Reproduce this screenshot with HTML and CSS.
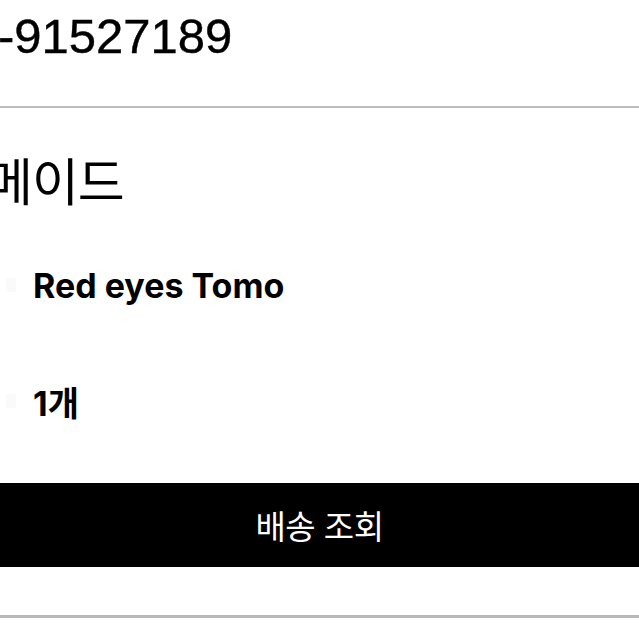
FILE: index.html
```html
<!DOCTYPE html>
<html lang="ko">
  <head>
    <meta charset="UTF-8" />
    <meta name="viewport" content="width=device-width, initial-scale=1.0" />
    <title>주문 상세</title>
    <link rel="stylesheet" href="styles.css">
  </head>
  <body>
    <main>
      <header class="order-no">-91527189</header>

      <section class="order">
        <h1 class="shop">메이드</h1>

        <div class="field">
          <span class="label"></span>
          <span class="value">Red eyes Tomo</span>
        </div>
        <div class="field">
          <span class="label"></span>
          <span class="value">1개</span>
        </div>
      </section>

      <button class="track">배송 조회</button>

      <div class="after"></div>
    </main>
  </body>
</html>
```

FILE: styles.css
```css
*,
*::before,
*::after {
  box-sizing: border-box;
  margin: 0;
  padding: 0;
}
html {
  font-family: "Liberation Sans", "Noto Sans CJK KR", sans-serif;
  color: #000;
}
body {
  background-color: #fff;
  overflow: hidden;
}
main {
  width: 639px;
  height: 639px;
  display: flex;
  flex-direction: column;
}

.order-no {
  font-size: 49px;
  line-height: 49px;
  height: 108px;
  padding-top: 12px;
  margin-left: -2px;
  border-bottom: 2px solid #bdbdbd;
  -webkit-text-stroke: 0.4px #000;
}

.order {
  display: flex;
  flex-direction: column;
  height: 375px;
}
.shop {
  font-family: "Noto Sans CJK KR", sans-serif;
  font-weight: 400;
  font-size: 51px;
  line-height: 51px;
  margin-top: 46px;
  margin-left: -14px;
  letter-spacing: -1px;
}
.field {
  display: flex;
  align-items: center;
  height: 116px;
  padding-left: 33px;
  position: relative;

  & .label {
    position: absolute;
    left: 6px;
    width: 10px;
    height: 14px;
    background-color: #fafafa;
  }
  & .value {
    font-family: "Inter", "Noto Sans CJK KR", sans-serif;
    font-weight: 700;
    font-size: 34px;
  }
}
.field:first-of-type {
  margin-top: 22px;
}

.track {
  height: 84px;
  width: 100%;
  border: none;
  background-color: #000;
  color: #fff;
  font-family: "Noto Sans CJK KR", sans-serif;
  font-size: 33px;
  font-weight: 400;
  letter-spacing: -0.5px;
  cursor: pointer;
}

.after {
  height: 51px;
  border-bottom: 3px solid #b9b9b9;
}
```
